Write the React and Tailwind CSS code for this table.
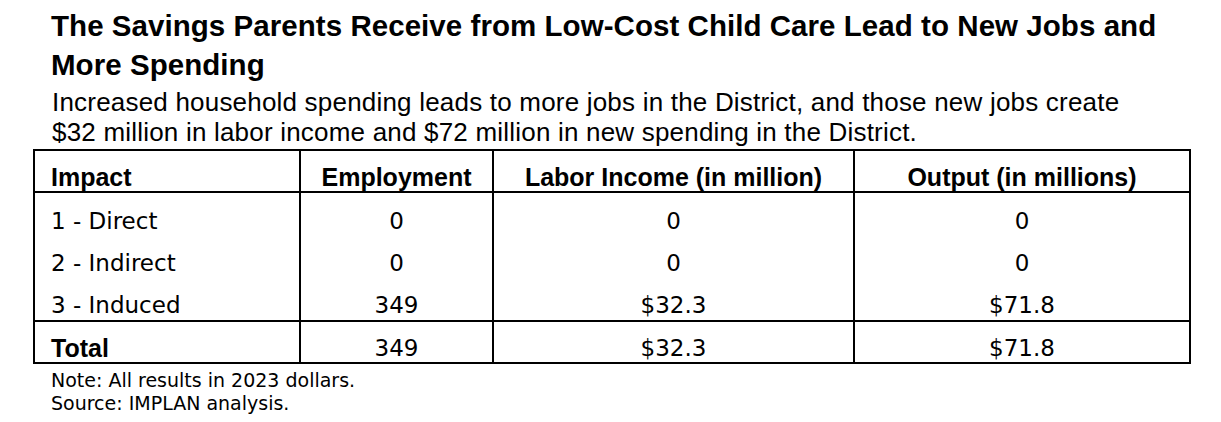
export default function App() {
  const rows = [
    ["1 - Direct", "0", "0", "0"],
    ["2 - Indirect", "0", "0", "0"],
    ["3 - Induced", "349", "$32.3", "$71.8"],
  ];
  const heights = ["h-[42px]", "h-[42px]", "h-[43px]"];
  const cols = "grid grid-cols-[264px_193px_361px_336px]";
  return (
    <div className="w-[1221px] h-[422px] bg-white text-black px-[33px] pt-[6px]">
      <h1
        className="pl-[18px] text-[29.5px] leading-[39px] font-bold tracking-[0.05px]"
        style={{ fontFamily: '"Liberation Sans", Arial, sans-serif' }}
      >
        The Savings Parents Receive from Low-Cost Child Care Lead to New Jobs and More Spending
      </h1>
      <p
        className="pl-[19px] mt-[3px] text-[26px] leading-[30px] tracking-[0.2px]"
        style={{ fontFamily: '"Liberation Sans", Arial, sans-serif' }}
      >
        Increased household spending leads to more jobs in the District, and those new jobs create
        <br />
        $32 million in labor income and $72 million in new spending in the District.
      </p>
      <div className="mt-[2px] w-[1158px] border-2 border-black">
        <div
          className={`${cols} h-[42px] border-b-2 border-black text-[25px] leading-[28px] font-bold`}
          style={{ fontFamily: '"Liberation Sans", Arial, sans-serif' }}
        >
          <div className="pl-[16px] pt-[12px]">Impact</div>
          <div className="border-l-2 border-black text-center pt-[12px]">Employment</div>
          <div className="border-l-2 border-black text-center pt-[12px]">Labor Income (in million)</div>
          <div className="border-l-2 border-black text-center pt-[12px]">Output (in millions)</div>
        </div>
        {rows.map((r, i) => (
          <div
            key={i}
            className={`${cols} ${heights[i]} text-[23px] leading-[28px]`}
            style={{ fontFamily: '"DejaVu Sans", sans-serif' }}
          >
            <div className="pl-[16px] pt-[14px]">{r[0]}</div>
            <div className="border-l-2 border-black text-center pt-[14px]">{r[1]}</div>
            <div className="border-l-2 border-black text-center pt-[14px]">{r[2]}</div>
            <div className="border-l-2 border-black text-center pt-[14px]">{r[3]}</div>
          </div>
        ))}
        <div
          className={`${cols} h-[42px] border-t-2 border-black text-[23px] leading-[28px]`}
          style={{ fontFamily: '"DejaVu Sans", sans-serif' }}
        >
          <div
            className="pl-[16px] pt-[12px] font-bold text-[25px]"
            style={{ fontFamily: '"Liberation Sans", Arial, sans-serif' }}
          >
            Total
          </div>
          <div className="border-l-2 border-black text-center pt-[12px]">349</div>
          <div className="border-l-2 border-black text-center pt-[12px]">$32.3</div>
          <div className="border-l-2 border-black text-center pt-[12px]">$71.8</div>
        </div>
      </div>
      <div
        className="pl-[18px] mt-[5px] text-[19px] leading-[23px]"
        style={{ fontFamily: '"DejaVu Sans", sans-serif' }}
      >
        <div>Note: All results in 2023 dollars.</div>
        <div>Source: IMPLAN analysis.</div>
      </div>
    </div>
  );
}
